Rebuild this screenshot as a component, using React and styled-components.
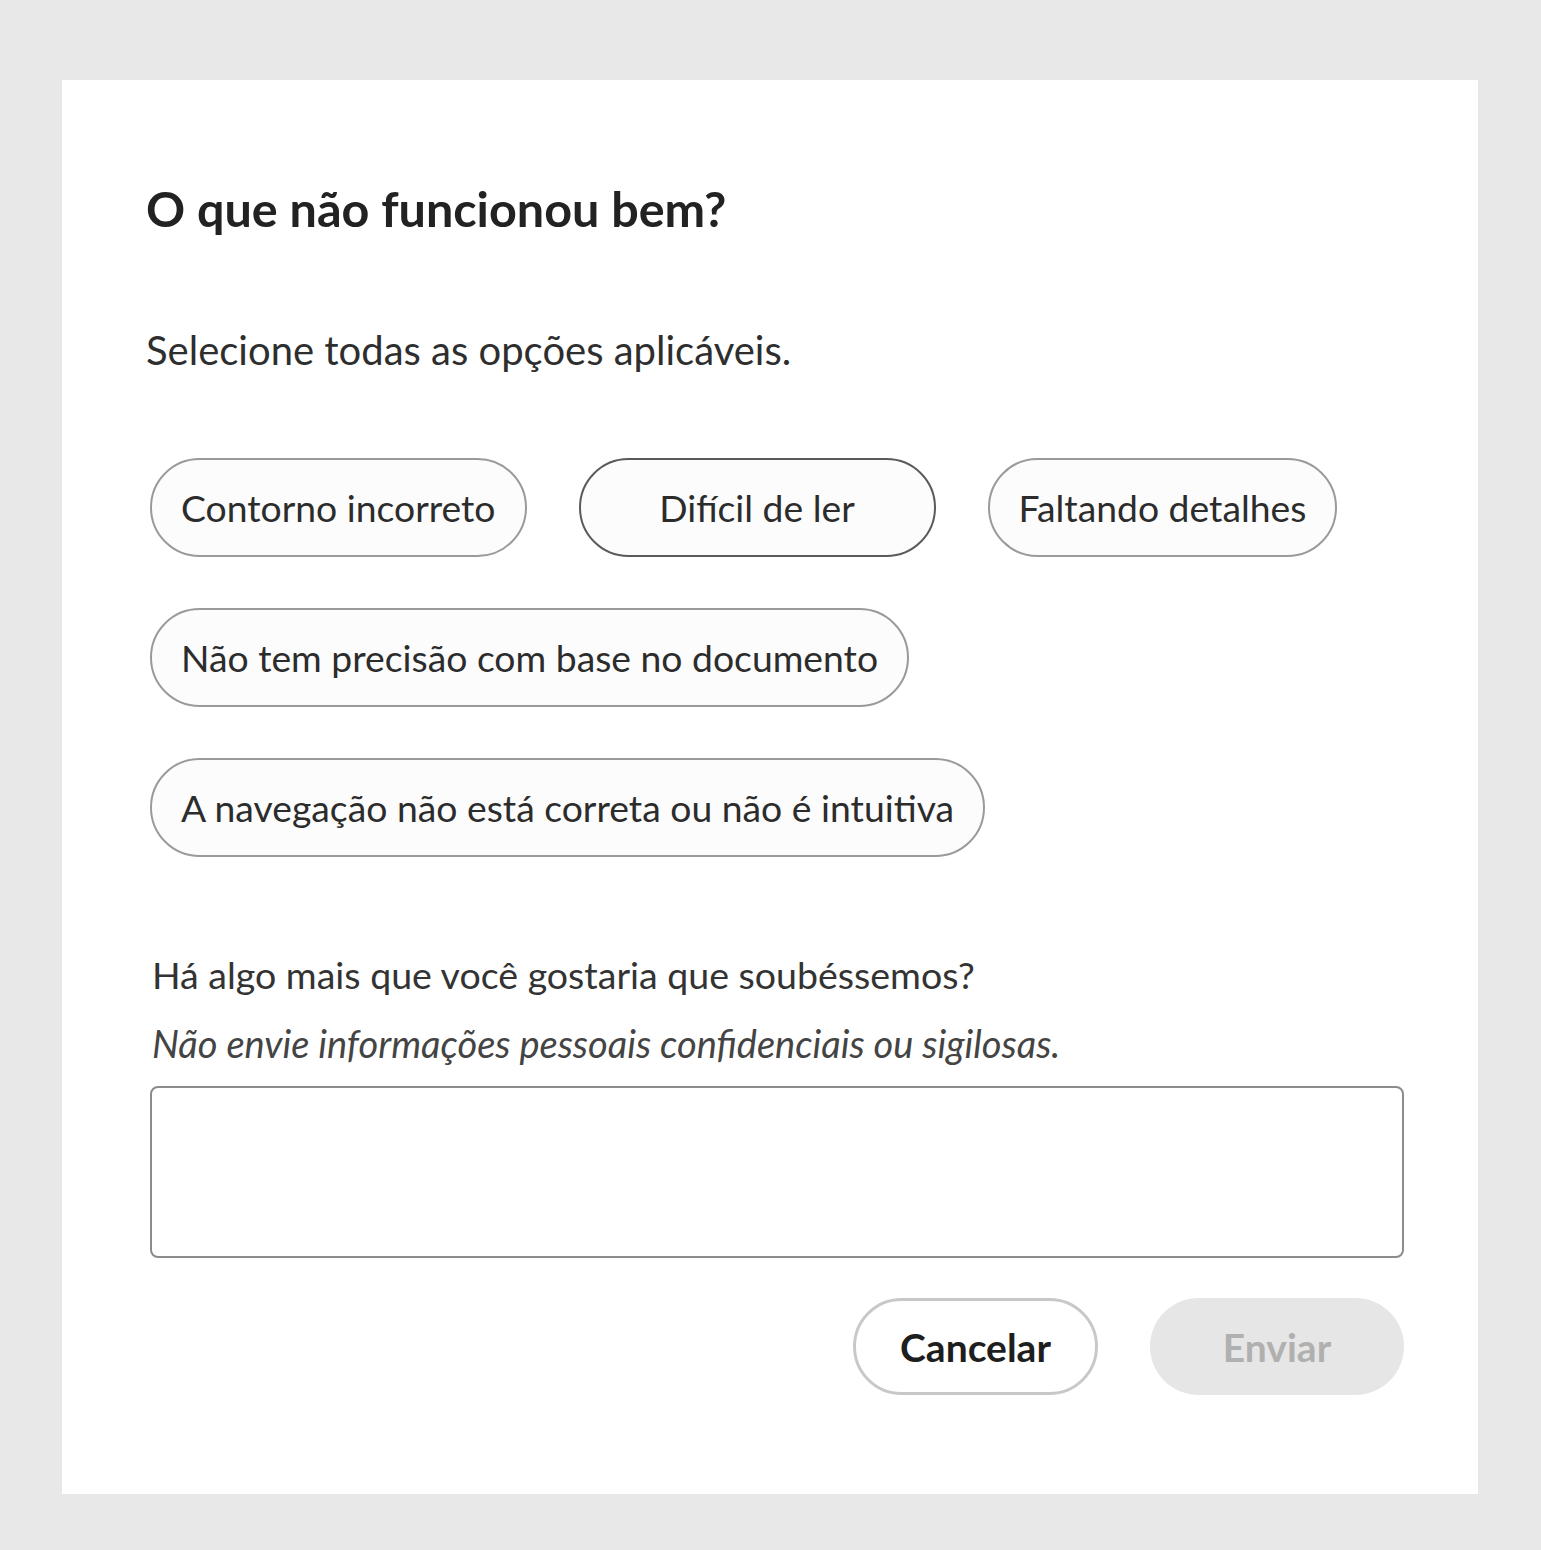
import styled, { createGlobalStyle } from 'styled-components';

const GlobalStyle = createGlobalStyle`
  html, body {
    margin: 0;
    padding: 0;
    background: #e8e8e8;
  }
  body {
    font-family: Lato, "Open Sans", "Liberation Sans", sans-serif;
    color: #2c2c2c;
  }
`;

const Page = styled.div`
  padding: 80px 63px 56px 62px;
`;

const Card = styled.div`
  background: #ffffff;
  height: 1414px;
  box-sizing: border-box;
  padding: 98px 74px 0 88px;
  display: flex;
  flex-direction: column;
`;

const Title = styled.h2`
  margin: 0 0 0 -4px;
  font-size: 48.5px;
  line-height: 60px;
  font-weight: 700;
  color: #222;
`;

const Subtitle = styled.p`
  margin: 87px 0 0 -4px;
  font-size: 40px;
  line-height: 50px;
  color: #2e2e2e;
`;

const Chips = styled.div`
  margin-top: 83px;
  display: flex;
  flex-wrap: wrap;
  column-gap: 52px;
  row-gap: 51px;
`;

const Chip = styled.button`
  box-sizing: border-box;
  height: 99px;
  min-width: ${p => p.$minWidth || 0}px;
  padding: 0 29px;
  border-radius: 50px;
  border: 2px solid ${p => (p.$active ? '#5a5a5a' : '#9a9a9a')};
  background: #fcfcfc;
  font-family: inherit;
  font-size: 37.3px;
  color: #2c2c2c;
  cursor: pointer;
`;

const Question = styled.p`
  margin: 98px 0 0 2px;
  font-size: 37.5px;
  line-height: 40px;
  color: #333;
`;

const Note = styled.p`
  margin: 28px 0 0 2px;
  font-size: 38px;
  line-height: 40px;
  font-style: italic;
  color: #444;
`;

const TextArea = styled.textarea`
  margin-top: 23px;
  height: 172px;
  box-sizing: border-box;
  border: 2px solid #8c8c8c;
  border-radius: 8px;
  resize: none;
  font-family: inherit;
  font-size: 32px;
  padding: 14px 18px;
  outline: none;
`;

const Actions = styled.div`
  margin-top: 40px;
  display: flex;
  justify-content: flex-end;
  gap: 52px;
`;

const ActionButton = styled.button`
  box-sizing: border-box;
  height: 97px;
  width: ${p => p.$width}px;
  border-radius: 50px;
  font-family: inherit;
  font-size: 39px;
  font-weight: 700;
  border: ${p => (p.$primary ? 'none' : '3px solid #c8c8c8')};
  background: ${p => (p.$primary ? '#e6e6e6' : '#fff')};
  color: ${p => (p.$primary ? '#b0b0b0' : '#1e1e1e')};
  cursor: ${p => (p.$primary ? 'default' : 'pointer')};
`;

const options = [
  { label: 'Contorno incorreto' },
  { label: 'Difícil de ler', minWidth: 357, active: true },
  { label: 'Faltando detalhes' },
  { label: 'Não tem precisão com base no documento' },
  { label: 'A navegação não está correta ou não é intuitiva' },
];

export default function App() {
  return (
    <>
      <GlobalStyle />
      <Page>
        <Card>
          <Title>O que não funcionou bem?</Title>
          <Subtitle>Selecione todas as opções aplicáveis.</Subtitle>
          <Chips>
            {options.map(o => (
              <Chip key={o.label} $minWidth={o.minWidth} $active={o.active}>
                {o.label}
              </Chip>
            ))}
          </Chips>
          <Question>Há algo mais que você gostaria que soubéssemos?</Question>
          <Note>Não envie informações pessoais confidenciais ou sigilosas.</Note>
          <TextArea />
          <Actions>
            <ActionButton $width={245}>Cancelar</ActionButton>
            <ActionButton $width={254} $primary disabled>
              Enviar
            </ActionButton>
          </Actions>
        </Card>
      </Page>
    </>
  );
}
